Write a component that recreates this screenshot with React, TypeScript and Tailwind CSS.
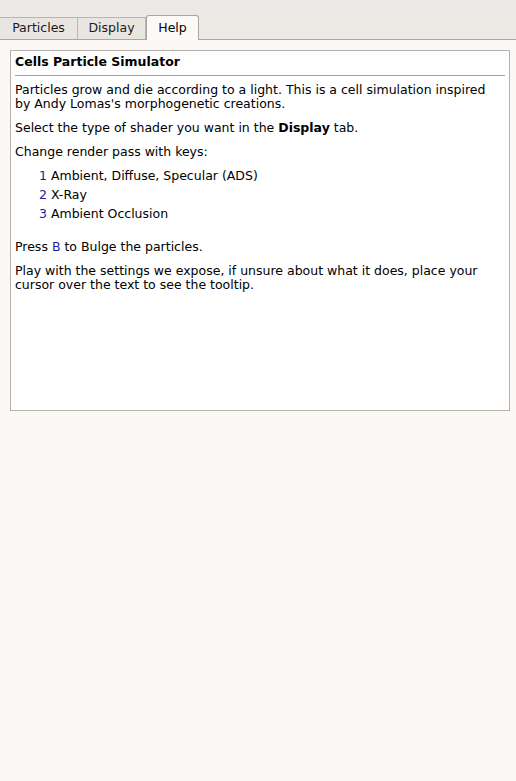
import React from "react";

const font = { fontFamily: '"DejaVu Sans", Verdana, sans-serif' };

function Tab({ label, active, w }: { label: string; active?: boolean; w: string }) {
  if (active) {
    return (
      <div
        className={`relative -mb-px flex h-[25px] items-center justify-center rounded-t-[3px] border border-b-0 border-[#a9a5a0] bg-[#fcf9f6] text-black ${w}`}
      >
        {label}
      </div>
    );
  }
  return (
    <div
      className={`flex h-[22px] items-center justify-center border-t border-r border-[#b9b5b0] bg-[#e9e6e2] text-[#1a1a1a] ${w}`}
    >
      {label}
    </div>
  );
}

export default function App() {
  return (
    <div className="h-[781px] w-[516px] bg-[#fcf8f5] text-[12.5px] text-black" style={font}>
      <div className="flex h-[40px] flex-col bg-[#ede9e4]">
        <div className="h-[5px] bg-gradient-to-b from-[#ebebeb] to-[#ede9e4]" />
        <div className="flex flex-1 items-end border-b border-[#aaa6a1]">
          <Tab label="Particles" w="w-[78px]" />
          <Tab label="Display" w="w-[68px]" />
          <Tab label="Help" active w="w-[53px]" />
        </div>
      </div>

      <div className="pl-[10px] pr-[6px] pt-[10px]">
        <div className="h-[361px] border border-[#b5b1ac] bg-white px-[4px] pt-[3px] leading-[14px]">
          <div className="border-b border-[#a0a0a0] pb-[6px] pt-[1px] font-bold">Cells Particle Simulator</div>
          <div className="max-w-[476px]">
            <p className="mt-[7px]">
              Particles grow and die according to a light. This is a cell simulation inspired by Andy Lomas's
              morphogenetic creations.
            </p>
            <p className="mt-[10px]">
              Select the type of shader you want in the <b>Display</b> tab.
            </p>
            <p className="mt-[10px]">Change render pass with keys:</p>
            <ul className="mt-[7px] pl-[24px]">
              <li className="h-[19px] leading-[19px]">
                <span className="text-[#1d1aa8]">1</span> Ambient, Diffuse, Specular (ADS)
              </li>
              <li className="h-[19px] leading-[19px]">
                <span className="text-[#1d1aa8]">2</span> X-Ray
              </li>
              <li className="h-[19px] leading-[19px]">
                <span className="text-[#1d1aa8]">3</span> Ambient Occlusion
              </li>
            </ul>
            <p className="mt-[17px]">
              Press <span className="text-[#1d1aa8]">B</span> to Bulge the particles.
            </p>
            <p className="mt-[10px]">
              Play with the settings we expose, if unsure about what it does, place your cursor over the text to
              see the tooltip.
            </p>
          </div>
        </div>
      </div>
    </div>
  );
}
